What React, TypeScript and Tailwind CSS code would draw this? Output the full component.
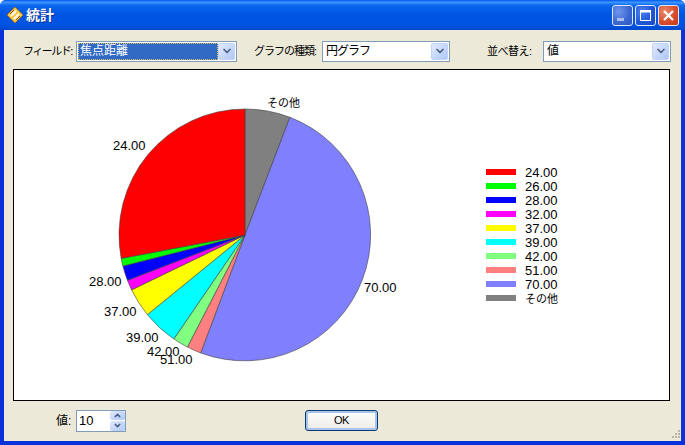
import React from 'react';
import { ChevronDown, ChevronUp } from 'lucide-react';

const UI_FONT = "font-['Liberation_Sans','Noto_Sans_CJK_JP',sans-serif]";

// angles are clockwise from 12 o'clock, in degrees
const slices = [
  { label: 'その他', color: '#808080', from: 0, to: 20.9 },
  { label: '70.00', color: '#8080ff', from: 20.9, to: 200.6 },
  { label: '51.00', color: '#ff8080', from: 200.6, to: 207.2 },
  { label: '42.00', color: '#80ff80', from: 207.2, to: 214.4 },
  { label: '39.00', color: '#00ffff', from: 214.4, to: 230.8 },
  { label: '37.00', color: '#ffff00', from: 230.8, to: 244.2 },
  { label: '32.00', color: '#ff00ff', from: 244.2, to: 248.9 },
  { label: '28.00', color: '#0000ff', from: 248.9, to: 255.7 },
  { label: '26.00', color: '#00ff00', from: 255.7, to: 259.3 },
  { label: '24.00', color: '#ff0000', from: 259.3, to: 360 },
];

// legend runs from the first value down to "other"
const legend = [...slices.slice(1).reverse(), slices[0]];

const pieLabels = [
  { text: 'その他', x: 267, y: 107, size: 11 },
  { text: '24.00', x: 113, y: 150, size: 13 },
  { text: '70.00', x: 364, y: 292, size: 13 },
  { text: '28.00', x: 89, y: 286, size: 13 },
  { text: '37.00', x: 104, y: 316, size: 13 },
  { text: '39.00', x: 126, y: 342, size: 13 },
  { text: '42.00', x: 147, y: 356, size: 13 },
  { text: '51.00', x: 160, y: 364, size: 13 },
];

const CX = 245;
const CY = 235;
const R = 126;

function slicePath(from: number, to: number) {
  const pt = (a: number) => {
    const rad = (a * Math.PI) / 180;
    return `${(CX + R * Math.sin(rad)).toFixed(2)} ${(CY - R * Math.cos(rad)).toFixed(2)}`;
  };
  const large = to - from > 180 ? 1 : 0;
  return `M${CX} ${CY}L${pt(from)}A${R} ${R} 0 ${large} 1 ${pt(to)}Z`;
}

function Combo({ value, width, selected }: { value: string; width: string; selected?: boolean }) {
  return (
    <div className={`${width} shrink-0 h-[21px] flex items-center bg-white border border-[#7f9db9] pl-px pr-px`}>
      <div className="flex-1 h-[17px] flex items-center">
        {selected ? (
          <span className="w-full h-full flex items-center px-[2px] bg-[#316ac5] text-white outline-1 outline-dotted outline-[#e8c060] -outline-offset-1">{value}</span>
        ) : (
          <span className="px-[2px]">{value}</span>
        )}
      </div>
      <div className="w-[17px] h-[17px] flex items-center justify-center rounded-[2px] bg-gradient-to-br from-[#e1eafe] to-[#aec8f7] border border-[#c3d3f8]">
        <ChevronDown size={12} strokeWidth={3.5} className="text-[#4d6185]" />
      </div>
    </div>
  );
}

function CaptionButton({ kind }: { kind: 'min' | 'max' | 'close' }) {
  const bg =
    kind === 'close'
      ? 'bg-[radial-gradient(circle_at_30%_30%,#e88a6c,#d8492a_60%,#c23a18)]'
      : kind === 'min'
        ? 'bg-[radial-gradient(circle_at_30%_30%,#6f95ec,#3a66cf_60%,#2b56bf)]'
        : 'bg-[radial-gradient(circle_at_30%_30%,#4c82ee,#1f55d5_60%,#1848bd)]';
  return (
    <div className={`w-[21px] h-[21px] rounded-[3px] border border-[#dfe8fb] flex items-center justify-center ${bg}`}>
      <svg width="15" height="15" viewBox="0 0 15 15">
        {kind === 'min' && <rect x="2" y="10" width="7" height="3" fill="#a8bff0" />}
        {kind === 'max' && (
          <>
            <rect x="2.5" y="3" width="10" height="9.5" fill="none" stroke="#fff" strokeWidth="1" />
            <rect x="2" y="2" width="11" height="2.5" fill="#fff" />
          </>
        )}
        {kind === 'close' && <path d="M3 3L12 12M12 3L3 12" stroke="#fff" strokeWidth="2.2" />}
      </svg>
    </div>
  );
}

export default function App() {
  return (
    <div className={`w-[685px] h-[445px] flex flex-col overflow-hidden bg-[#0831d9] rounded-t-[6px] text-[12px] text-black ${UI_FONT}`}>
      {/* title bar */}
      <div className="h-[30px] shrink-0 flex items-center pl-[6px] pr-[6px] bg-[linear-gradient(180deg,#0058ee_0%,#3d95ff_8%,#0a66ee_18%,#0054e3_50%,#0055e5_80%,#0048cc_100%)]">
        <svg width="18" height="18" viewBox="0 0 18 18" className="shrink-0">
          <path d="M9 1L17 9L9 17L1 9Z" fill="#f7c948" stroke="#a87010" strokeWidth="1" />
          <path d="M5 10L10 5M8 13L13 8" stroke="#fff" strokeWidth="1.8" />
          <path d="M4 8L8 4M10 14L14 10" stroke="#8a5a08" strokeWidth="1" />
        </svg>
        <span className="ml-[2px] text-[14px] font-bold text-white [text-shadow:1px_1px_0_#0a2a90]">統計</span>
        <div className="ml-auto flex gap-[2px]">
          <CaptionButton kind="min" />
          <CaptionButton kind="max" />
          <CaptionButton kind="close" />
        </div>
      </div>

      {/* client area */}
      <div className="flex-1 flex flex-col mx-[4px] mb-[4px] bg-[#ece9d8] relative">
        <div className="h-[39px] shrink-0 flex items-center pt-[3px] whitespace-nowrap text-[11px]">
          <span className="ml-[19px] w-[53px] tracking-[-1.5px]">フィールド:</span>
          <div className="text-[12px]"><Combo value="焦点距離" width="w-[161px]" selected /></div>
          <span className="ml-[17px] w-[68px] tracking-[-1px]">グラフの種類:</span>
          <div className="text-[12px] tracking-[-1px]"><Combo value="円グラフ" width="w-[128px]" /></div>
          <span className="ml-[37px] w-[56px] tracking-[-0.5px]">並べ替え:</span>
          <div className="text-[12px]"><Combo value="値" width="w-[128px]" /></div>
        </div>

        {/* chart */}
        <div className="h-[332px] ml-[9px] mr-[11px] border border-black bg-white">
          <svg width="655" height="330" viewBox="14 70 655 330" className="block">
            {slices.map((s) => (
              <path key={s.label} d={slicePath(s.from, s.to)} fill={s.color} stroke="#404040" strokeWidth="0.6" />
            ))}
            {pieLabels.map((l) => (
              <text key={l.text} x={l.x} y={l.y} fontSize={l.size} fill="#000">{l.text}</text>
            ))}
            {legend.map((s, i) => (
              <g key={s.label}>
                <rect x="486" y={169 + i * 14} width="30" height="6" fill={s.color} />
                <text x="525" y={177 + i * 14} fontSize={s.label === 'その他' ? 11 : 13} fill="#000">{s.label}</text>
              </g>
            ))}
          </svg>
        </div>

        {/* bottom row */}
        <div className="flex-1 flex items-center pb-[1px]">
          <span className="ml-[52px] w-[20px]">値:</span>
          <div className="w-[50px] h-[22px] flex items-center bg-white border border-[#7f9db9] pl-[2px]">
            <span className="flex-1 text-[13px]">10</span>
            <div className="w-[15px] h-[20px] flex flex-col gap-px">
              <div className="flex-1 flex items-center justify-center rounded-[2px] bg-gradient-to-br from-[#e1eafe] to-[#aec8f7]">
                <ChevronUp size={9} strokeWidth={4} className="text-[#4d6185]" />
              </div>
              <div className="flex-1 flex items-center justify-center rounded-[2px] bg-gradient-to-br from-[#e1eafe] to-[#aec8f7]">
                <ChevronDown size={9} strokeWidth={4} className="text-[#4d6185]" />
              </div>
            </div>
          </div>
          <button className="ml-[179px] w-[73px] h-[21px] flex items-center justify-center rounded-[3px] border border-[#003c74] bg-gradient-to-b from-white to-[#ecebe5] shadow-[inset_0_0_0_2px_#a9c4ea] text-[11px] tracking-[-0.5px]">
            OK
          </button>
        </div>

        {/* resize grip */}
        <svg width="12" height="12" viewBox="0 0 12 12" className="absolute right-0 bottom-0">
          {[[9, 1], [6, 4], [9, 4], [3, 7], [6, 7], [9, 7]].map(([x, y]) => (
            <rect key={`${x}-${y}`} x={x} y={y} width="2" height="2" fill="#b8b5a4" />
          ))}
        </svg>
      </div>
    </div>
  );
}
